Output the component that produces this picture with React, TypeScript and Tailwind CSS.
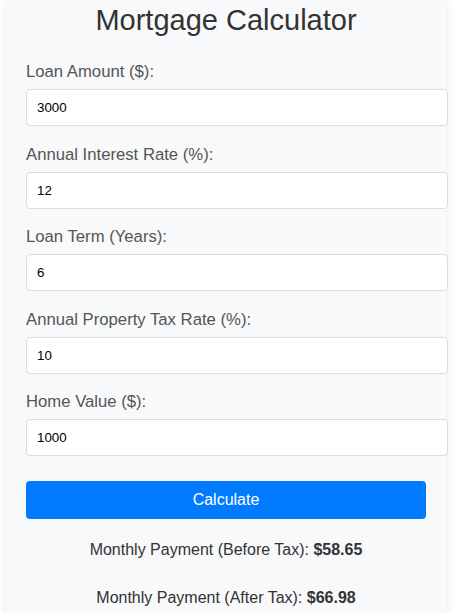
import React from "react";

const fields = [
  { label: "Loan Amount ($):", value: "3000" },
  { label: "Annual Interest Rate (%):", value: "12" },
  { label: "Loan Term (Years):", value: "6" },
  { label: "Annual Property Tax Rate (%):", value: "10" },
  { label: "Home Value ($):", value: "1000" },
];

export default function App() {
  return (
    <div className="min-h-screen bg-white font-['Liberation_Sans',Arial,sans-serif] overflow-hidden">
      <div className="ml-[6px] w-[440px] px-[20px] pt-[4px] pb-[20px] bg-[#f8f9fa] shadow-[0_0_10px_rgba(0,0,0,0.1)] rounded-[8px]">
        <h2 className="text-center text-[29px] leading-[33px] text-[#333] mb-[25px]">
          Mortgage Calculator
        </h2>
        <div className="flex flex-col gap-[18.5px]">
          {fields.map((f) => (
            <div key={f.label}>
              <label className="block text-[16.7px] leading-[19px] text-[#555] mb-[8px]">
                {f.label}
              </label>
              <input
                type="number"
                defaultValue={f.value}
                className="block w-[422px] h-[37px] px-[10px] border border-[#ddd] rounded-[4px] bg-white text-[13.33px] text-black outline-none"
              />
            </div>
          ))}
        </div>
        <button className="mt-[25px] block w-full h-[38px] bg-[#007bff] text-white text-[16px] rounded-[4px]">
          Calculate
        </button>
        <p className="mt-[22px] text-center text-[16px] leading-[18px] text-[#333]">
          Monthly Payment (Before Tax): <strong className="font-bold">$58.65</strong>
        </p>
        <p className="mt-[30px] text-center text-[16px] leading-[18px] text-[#333]">
          Monthly Payment (After Tax): <strong className="font-bold">$66.98</strong>
        </p>
      </div>
    </div>
  );
}
